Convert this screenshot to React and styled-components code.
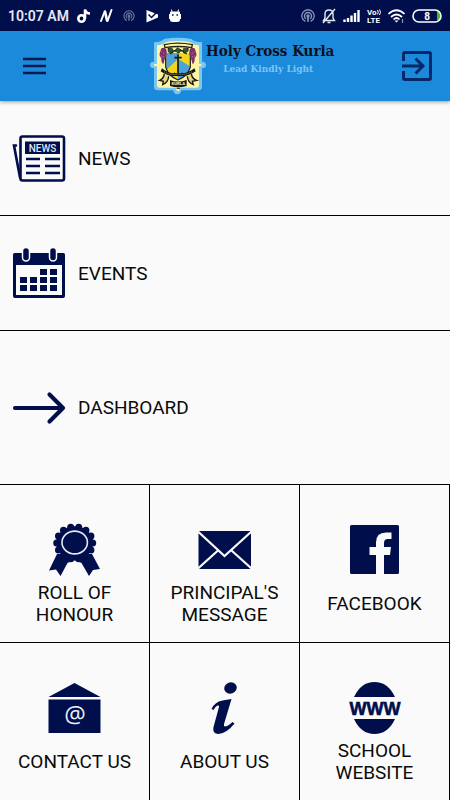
import React from 'react';
import styled, { createGlobalStyle } from 'styled-components';

const navy = '#000e4b';
const blue = '#1c8adb';

const GlobalStyle = createGlobalStyle`
  * {
    box-sizing: border-box;
  }

  body {
    margin: 0;
    background: #fafafa;
    color: #0a0a0a;
    font-family: Roboto, 'Liberation Sans', sans-serif;
  }
`;

const Page = styled.div`
  display: flex;
  flex-direction: column;
  min-height: 100vh;
`;

const StatusBar = styled.div`
  display: flex;
  align-items: center;
  height: 31px;
  padding: 0 8px;
  background: ${navy};
  color: #e6e8f0;
`;

const Clock = styled.time`
  flex: none;
  width: 67px;
  font-size: 14px;
  font-weight: 600;
  line-height: 20px;
  white-space: nowrap;
`;

const StatusIcons = styled.div`
  display: flex;
  align-items: center;
  gap: 7px;
  flex: ${props => (props.grow ? 1 : 'none')};

  svg {
    display: block;
    flex: none;
  }
`;

const AppBar = styled.header`
  display: grid;
  grid-template-columns: 1fr 2fr;
  align-items: center;
  height: 70px;
  background: ${blue};
  box-shadow: 0 1px 4px rgba(0, 0, 0, 0.4);
`;

const BarEnd = styled.div`
  display: flex;
  align-items: center;
  justify-content: space-between;
  padding-right: 9px;
`;

const IconButton = styled.button`
  display: flex;
  align-items: center;
  justify-content: center;
  width: 48px;
  height: 48px;
  margin-left: ${props => (props.inset ? '11px' : 0)};
  padding: 0;
  border: 0;
  background: none;
  color: #06286b;
  cursor: pointer;
`;

const Brand = styled.div`
  display: flex;
  align-items: flex-start;

  svg {
    display: block;
    flex: none;
  }
`;

const BrandText = styled.div`
  padding-top: 4px;
  font-family: 'DejaVu Serif Condensed', 'DejaVu Serif', serif;
  font-weight: 700;
  text-align: center;
  white-space: nowrap;
`;

const School = styled.h1`
  margin: 0;
  color: #0b0f1c;
  font-size: 15px;
  line-height: 20px;
`;

const Motto = styled.p`
  margin: 0;
  padding-right: 4px;
  color: #7cc4f4;
  font-size: 10px;
  line-height: 16px;
`;

const Menu = styled.nav`
  display: flex;
  flex: 1;
  flex-direction: column;
`;

const Row = styled.a`
  display: flex;
  align-items: center;
  gap: 12px;
  flex: ${props => (props.tall ? '1 0 154px' : '0 0 115px')};
  padding: ${props => (props.tall ? '0 12px' : '2px 12px 0')};
  border-bottom: 1px solid #000;
  color: inherit;
  font-size: 19px;
  line-height: 22px;
  text-decoration: none;
`;

const Grid = styled.div`
  display: grid;
  grid-template-columns: repeat(3, 1fr);
`;

const Tile = styled.a`
  display: flex;
  flex-direction: column;
  align-items: center;
  gap: 5px;
  padding: 38px 12px 16px;
  border-right: 1px solid #000;
  color: inherit;
  text-decoration: none;

  &:nth-child(-n + 3) {
    border-bottom: 1px solid #000;
  }
`;

const TileLabel = styled.span`
  display: flex;
  align-items: center;
  min-height: 44px;
  font-size: 19px;
  line-height: 22px;
  text-align: center;
`;

const Icon = ({ children }) => (
  <svg width="54" height="54" viewBox="0 0 54 54" fill={navy} aria-hidden="true">
    {children}
  </svg>
);

const NewsIcon = () => (
  <Icon>
    <path
      d="M4 13.500H2l6 32"
      fill="none"
      stroke={navy}
      strokeWidth="2.600"
      strokeLinecap="round"
    />
    <rect x="8.500" y="4.500" width="43.500" height="44" rx="2" fill="#fafafa" stroke={navy} strokeWidth="2.600" />
    <rect x="13" y="9.500" width="35" height="12.500" />
    <text
      x="30.500"
      y="19.500"
      fill="#dfe3f2"
      fontFamily="Roboto, sans-serif"
      fontSize="10"
      fontWeight="500"
      textAnchor="middle"
    >
      NEWS
    </text>
    <path
      d="M14 27h14m5 0h15M14 34h14m5 0h15M14 41h14m5 0h15"
      stroke={navy}
      strokeWidth="2.400"
      fill="none"
    />
  </Icon>
);

const EventsIcon = () => (
  <Icon>
    <path d="M2.500 6h49Q53 6 53 8v41q0 2-2 2H3q-2 0-2-2V8q0-2 1.500-2z" />
    <rect x="4" y="18" width="46" height="30" fill="#fafafa" />
    <path
      d="M14 4.500v6M41 4.500v6"
      stroke="#fafafa"
      strokeWidth="8.500"
      strokeLinecap="round"
    />
    <path d="M14 4v6.500M41 4v6.500" stroke={navy} strokeWidth="5.500" strokeLinecap="round" />
    <path d="M28 22h7v6h-7zM38 22h7v6h-7zM8 30h7v6H8zM18 30h7v6h-7zM28 30h7v6h-7zM38 30h7v6h-7zM8 38h7v6H8zM18 38h7v6h-7zM28 38h7v6h-7zM38 38h7v6h-7z" />
  </Icon>
);

const ArrowIcon = () => (
  <Icon>
    <path
      d="M3 27h48M37.500 13.500L51 27 37.500 40.500"
      fill="none"
      stroke={navy}
      strokeWidth="4.200"
      strokeLinecap="round"
      strokeLinejoin="round"
    />
  </Icon>
);

const scallops = Array.from({ length: 14 }, (_, i) => {
  const angle = ((i + 0.5) * Math.PI) / 7;
  return { cx: 26.7 + 18 * Math.sin(angle), cy: 20 - 16.2 * Math.cos(angle) };
});

const AwardIcon = () => (
  <Icon>
    <path d="M9 31L1 47.500l7-1 4.500 6.500 7-13q7-5 14 0l7.500 13 4-6 7-1-8-15z" />
    <ellipse cx="26.700" cy="20" rx="18.500" ry="16.700" />
    {scallops.map(({ cx, cy }) => (
      <circle key={cx + cy} cx={cx} cy={cy} r="3.500" />
    ))}
    <ellipse cx="26.700" cy="19.500" rx="12.700" ry="11.400" fill="none" stroke="#e6e8f5" strokeWidth="1.600" />
  </Icon>
);

const MailIcon = () => (
  <Icon>
    <rect x="0.500" y="8" width="52.500" height="38" rx="1" />
    <path
      d="M0 8.500l26.500 24.500L53.500 8.500M0 45.500l20-18M53.500 45.500l-20-18"
      fill="none"
      stroke="#fafafa"
      strokeWidth="2.200"
    />
  </Icon>
);

const FacebookIcon = () => (
  <Icon>
    <path d="M3.500 2h46q1.500 0 1.500 1.500v46q0 1.500-1.500 1.500H36V32h6l1-8h-7v-4q0-4 4-4h3.500V9.500H38q-10 0-10 10V24h-6.500v8H28v19H3.500Q2 51 2 49.500v-46Q2 2 3.500 2z" />
  </Icon>
);

const ContactIcon = () => (
  <Icon>
    <path d="M26.500 2L52.500 16H.5zM.5 18.500h52V52H.5z" />
    <text
      x="27"
      y="42"
      fill="#eef0fa"
      fontFamily="Open Sans, sans-serif"
      fontSize="24"
      fontWeight="500"
      textAnchor="middle"
    >
      @
    </text>
  </Icon>
);

const InfoIcon = () => (
  <Icon>
    <ellipse cx="32.500" cy="7" rx="6.300" ry="5.600" transform="rotate(-20 32.500 7)" />
    <path d="M13.500 28q3-7 11-8.500l9-1.500-7.500 25q-.5 2.500 1 2.500 2.500 0 7.500-4.500l2 1.500q-8 10-16 10.500-6.500 0-5-7l5.500-20q.500-2-1.500-1.500-2 .500-4 4.500z" />
  </Icon>
);

const WebIcon = () => (
  <Icon>
    <path d="M6 16Q13 1 26.500 1T47 16zM6 38q7 15 20.500 15T47 38z" />
    <text
      x="27"
      y="33.500"
      fontFamily="Liberation Sans, sans-serif"
      fontSize="18"
      fontWeight="700"
      textAnchor="middle"
      stroke={navy}
      strokeWidth="0.600"
    >
      WWW
    </text>
  </Icon>
);

const Crest = () => (
  <svg width="56" height="58" viewBox="30 22 168 174" aria-hidden="true">
    <path
      d="M42 38q20 0 30-10 42-8 82 0 10 10 32 10v58q12 0 12 10t-12 10v56q0 10-12 10h-50q-2 12-12 12t-12-12H54q-12 0-12-10v-56q-12 0-12-10t12-10z"
      fill="#79c7f2"
    />
    <path
      d="M51 47q16 0 26-9 36-8 72 0 12 9 28 9v55q8 0 8 4t-8 4v57q0 7-8 7h-49q0 10-6 10t-6-10H59q-8 0-8-7v-57q-10 0-10-4t10-4z"
      fill="#fff6a3"
    />
    <path d="M79 70h71v40q-7 28-36 40-28-12-35-40z" fill="#f2d51d" />
    <path d="M79 70h35v18l-35 32zM114 88l36 22q-6 28-36 40z" fill="#4ba3dc" />
    <path d="M77 70v42q8 28 37 39 29-11 37-39V70" fill="none" stroke="#171717" strokeWidth="3.500" />
    <path d="M114 74v63M103 84h22M101 130q13 14 27 0" fill="none" stroke="#171717" strokeWidth="5" />
    <path
      d="M73 45q40-9 84 0l-2 9q-40-7-80 0zM84 55l14 15M145 55l-14 15M90 73q25-24 50 0"
      fill="none"
      stroke="#25251a"
      strokeWidth="4"
    />
    <path d="M84 57q14-6 15 5t-14 5zM112 54l12 7-7 10-12-7zM130 57q15-4 15 4t-14 7z" fill="#275c35" stroke="#171717" strokeWidth="2" />
    <path
      d="M64 56q12-5 15 4 4 12-3 22l-6 22q-7-5-6-18-8-8-4-18zM164 56q-12-5-15 4-4 12 3 22l6 22q7-5 6-18 8-8 4-18z"
      fill="#7f316c"
    />
    <path d="M64 66l11 8M63 79l13 4M164 66l-11 8M165 79l-13 4" stroke="#bd78a1" strokeWidth="3" strokeDasharray="3 3" />
    <path
      d="M66 116q23 20 48 14 26 5 49-14l4 9q-24 18-53 13-29 5-52-13z"
      fill="#151515"
    />
    <path d="M72 126q20 12 42 7 24 4 42-7" stroke="#e8d98b" strokeWidth="2" strokeDasharray="3 3" fill="none" />
    <path
      d="M73 133q-3 15-14 19l11 3-2 10q17-7 18-25M154 133q3 15 16 19l-13 3 3 10q-17-7-18-25"
      fill="#e7d47a"
      stroke="#171717"
      strokeWidth="4"
    />
    <path d="M90 151q24 9 50 0v18q-25 8-50 0z" fill="#191919" />
    <text x="115" y="167" fill="#fff6c0" fontFamily="Roboto, sans-serif" fontSize="13" fontWeight="700" textAnchor="middle">
      KURLA
    </text>
    <path d="M110 176h10" stroke="#44442c" strokeWidth="4" />
  </svg>
);

const MenuIcon = () => (
  <svg width="24" height="18" viewBox="0 0 24 18" aria-hidden="true">
    <path d="M0 2h23M0 9h23M0 16h23" stroke="#0a1a50" strokeWidth="2.400" />
  </svg>
);

const ExitIcon = () => (
  <svg width="32" height="32" viewBox="0 0 32 32" fill="none" stroke="currentColor" strokeWidth="3" aria-hidden="true">
    <path d="M2.500 11V4q0-1.500 1.500-1.500h24q1.500 0 1.500 1.500v24q0 1.500-1.500 1.500H4q-1.500 0-1.500-1.500v-7" />
    <path d="M1 16h20M14.500 8.500L22 16l-7.500 7.500" />
  </svg>
);

const NoteIcon = () => (
  <svg width="16" height="16" viewBox="0 0 16 16" fill="none" stroke="#fff" strokeWidth="2.600">
    <circle cx="6.500" cy="10.500" r="3.200" />
    <path d="M10 10.500V1.500q1 4 5 4" />
  </svg>
);

const SlashesIcon = () => (
  <svg width="16" height="16" viewBox="0 0 16 16" fill="none" stroke="#fff" strokeLinecap="round">
    <path d="M3 13l3.500-9M9.500 13l4-11" strokeWidth="2" />
    <path d="M7 3.500l2 9" strokeWidth="2.600" />
  </svg>
);

const CastIcon = ({ size, color, box = '0 0 16 16' }) => (
  <svg width={size} height={size} viewBox={box} fill="none" stroke={color} strokeWidth="1.500">
    <path d="M5 14.200a7 7 0 1 1 6 0M5.600 11.200a4 4 0 1 1 4.800 0" />
    <circle cx="8" cy="8" r="1.200" fill={color} />
    <path d="M8 9v5.500" strokeWidth="2" />
  </svg>
);

const PlayIcon = () => (
  <svg width="16" height="16" viewBox="0 0 16 16" fill="#fff">
    <path d="M2.500 2L14 6.500v3L2.500 14.500z" />
    <path d="M4.500 6.500L7.500 9.500 14 3" fill="none" stroke={navy} strokeWidth="1.500" />
  </svg>
);

const RobotIcon = () => (
  <svg width="16" height="16" viewBox="0 0 16 16" fill="#fff">
    <path d="M4 3.500h8q1 0 1 1V6h1v5h-1v.5q0 2.500-3 2.500H6q-3 0-3-2.500V11H2V6h1V4.500q0-1 1-1z" />
    <path d="M4.500 1.500l.5 2.500M11.500 1.500L11 4" stroke="#fff" />
    <path d="M5 7h1.500M9.500 7H11" stroke={navy} strokeWidth="1.600" />
  </svg>
);

const BellOffIcon = () => (
  <svg width="14" height="16" viewBox="0 0 14 16" fill="none" stroke="#e6e8f0" strokeWidth="1.400">
    <path d="M1.500 12.500h11L11 10V6q0-4-4-4T3 6v4zM5.500 14.500h3M1 15L13 1" />
  </svg>
);

const SignalIcon = () => (
  <svg width="17" height="14" viewBox="0 0 17 14" stroke="#fff" strokeWidth="2.400">
    <path d="M1.500 13v-2.500M5 13V9M8.500 13V6.500M12 13V4M15.500 13V1" />
  </svg>
);

const VolteIcon = () => (
  <svg width="14" height="16" viewBox="0 0 14 16" fill="#fff" fontFamily="Roboto, sans-serif" fontWeight="700">
    <text x="0" y="7" fontSize="8">Vo</text>
    <path d="M10.500 2q1.500 2 0 4.500M12.500 1.500q2 2.500 0 5.500" fill="none" stroke="#fff" />
    <text x="0" y="15" fontSize="8">LTE</text>
  </svg>
);

const WifiIcon = () => (
  <svg width="17" height="16" viewBox="0 0 17 16" fill="none" stroke="#fff" strokeWidth="1.700">
    <path d="M.5 6q8-7.500 16 0M3 9q5.500-5 11 0M5.500 11.500q3-3 6 0" />
    <path d="M6.500 12.500h4l-2 2z" fill="#fff" stroke="none" />
    <path d="M14.500 11v4" stroke="#8d94b5" strokeWidth="1.200" />
  </svg>
);

const BatteryIcon = () => (
  <svg width="30" height="14" viewBox="0 0 30 14">
    <path d="M25 2.500h1.500q2 0 2 4.500t-2 4.500H25z" fill="#3fc31c" />
    <rect x="1" y="1" width="28" height="12" rx="6" fill="none" stroke="#fff" strokeWidth="1.600" />
    <text x="15" y="11" fill="#fff" fontFamily="Roboto, sans-serif" fontSize="10" fontWeight="700" textAnchor="middle">
      8
    </text>
  </svg>
);

const rows = [
  { label: 'NEWS', href: '#news', Glyph: NewsIcon },
  { label: 'EVENTS', href: '#events', Glyph: EventsIcon },
  { label: 'DASHBOARD', href: '#dashboard', Glyph: ArrowIcon, tall: true },
];

const tiles = [
  { label: 'ROLL OF HONOUR', href: '#honour', Glyph: AwardIcon },
  { label: "PRINCIPAL'S MESSAGE", href: '#principal', Glyph: MailIcon },
  { label: 'FACEBOOK', href: '#facebook', Glyph: FacebookIcon },
  { label: 'CONTACT US', href: '#contact', Glyph: ContactIcon },
  { label: 'ABOUT US', href: '#about', Glyph: InfoIcon },
  { label: 'SCHOOL WEBSITE', href: '#website', Glyph: WebIcon },
];

const App = () => (
  <Page>
    <GlobalStyle />
    <StatusBar>
      <Clock>10:07 AM</Clock>
      <StatusIcons grow={1}>
        <NoteIcon />
        <SlashesIcon />
        <CastIcon size={16} color="#6d769f" box="-3 -3 22 22" />
        <PlayIcon />
        <RobotIcon />
      </StatusIcons>
      <StatusIcons>
        <CastIcon size={14} color="#8d94b5" />
        <BellOffIcon />
        <SignalIcon />
        <VolteIcon />
        <WifiIcon />
        <BatteryIcon />
      </StatusIcons>
    </StatusBar>
    <AppBar>
      <IconButton type="button" aria-label="Open menu" inset={1}>
        <MenuIcon />
      </IconButton>
      <BarEnd>
        <Brand>
          <Crest />
          <BrandText>
            <School>Holy Cross Kurla</School>
            <Motto>Lead Kindly Light</Motto>
          </BrandText>
        </Brand>
        <IconButton type="button" aria-label="Log out">
          <ExitIcon />
        </IconButton>
      </BarEnd>
    </AppBar>
    <Menu>
      {rows.map(({ label, href, Glyph, tall }) => (
        <Row key={label} href={href} tall={tall ? 1 : undefined}>
          <Glyph />
          {label}
        </Row>
      ))}
      <Grid>
        {tiles.map(({ label, href, Glyph }) => (
          <Tile key={label} href={href}>
            <Glyph />
            <TileLabel>{label}</TileLabel>
          </Tile>
        ))}
      </Grid>
    </Menu>
  </Page>
);

export default App;
